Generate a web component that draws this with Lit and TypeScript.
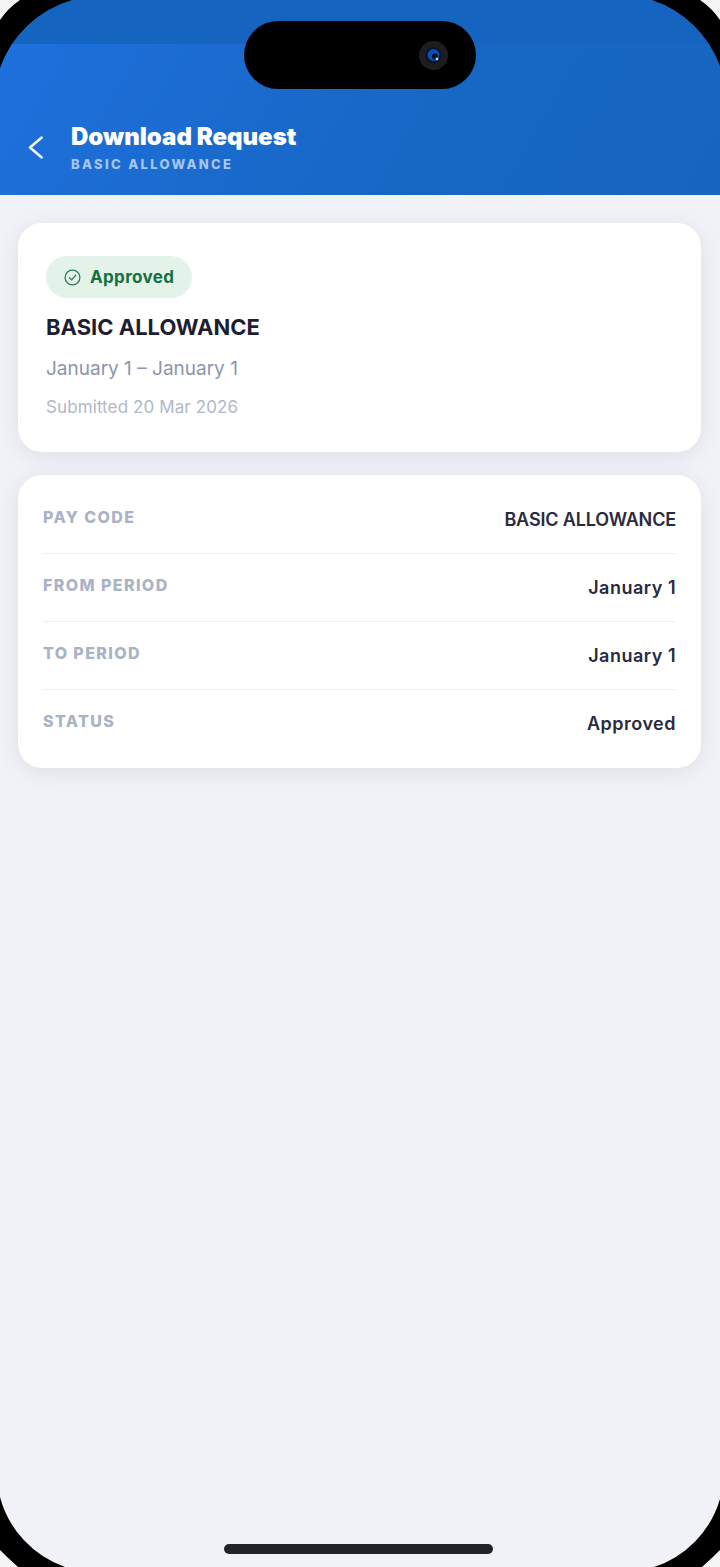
import { LitElement, html, css, svg } from "lit";
import { customElement } from "lit/decorators.js";

const rows = [
  ["PAY CODE", "BASIC ALLOWANCE", true],
  ["FROM PERIOD", "January 1", false],
  ["TO PERIOD", "January 1", false],
  ["STATUS", "Approved", false],
];

@customElement("app-root")
export class AppRoot extends LitElement {
  static styles = css`
    :host {
      display: block;
      position: relative;
      width: 720px;
      height: 1567px;
      overflow: hidden;
      background: #f0f2f7;
      font-family: Inter, "Liberation Sans", sans-serif;
    }
    .status { height: 44px; background: #1565c0; }
    .header {
      box-sizing: border-box;
      height: 151px;
      padding: 77px 0 0 24px;
      display: flex;
      align-items: flex-start;
      gap: 23px;
      background: linear-gradient(120deg, #1e70dc 0%, #1b6bd0 30%, #1666c3 65%, #1565c0 100%);
    }
    .back { width: 24px; height: 24px; margin-top: 15px; flex: none; }
    .title { margin-top: -2px; font-size: 24px; line-height: 36px; font-weight: 900; color: #fff; letter-spacing: 0; }
    .sub { font-size: 13px; line-height: 20px; margin-top: -1px; font-weight: 800; letter-spacing: 2.33px; color: #a6c6f2; }
    .content { padding: 28px 19px 0 18px; display: flex; flex-direction: column; gap: 23px; }
    .card { background: #fff; border-radius: 24px; box-shadow: 0 4px 24px rgba(0, 0, 0, 0.08); }
    .summary { box-sizing: border-box; height: 229px; padding: 33px 28px 0; display: flex; flex-direction: column; align-items: flex-start; }
    .badge {
      box-sizing: border-box; height: 42px; width: 146px; padding-left: 18px; border-radius: 21px;
      display: flex; align-items: center; gap: 9px;
      background: #e3f3ea; color: #15703f; font-size: 17px; font-weight: 700; letter-spacing: 0.35px;
    }
    .badge svg { width: 17px; height: 17px; flex: none; }
    .name { margin-top: 14px; font-size: 22px; line-height: 30px; font-weight: 700; color: #1e1e32; }
    .date { margin-top: 13px; font-size: 19px; line-height: 27px; font-weight: 400; color: #8d95aa; }
    .submitted { margin-top: 13px; font-size: 17px; line-height: 24px; font-weight: 400; letter-spacing: 0.1px; color: #b1b8c7; }
    .details { padding: 11px 25px 10px; }
    .row { display: flex; justify-content: space-between; align-items: flex-start; padding: 20px 0; height: 27px; border-bottom: 1px solid #eceef3; }
    .row:last-child { border-bottom: 0; padding-bottom: 21px; }
    .label { margin-top: -1px; font-size: 16px; line-height: 24px; font-weight: 800; letter-spacing: 1.4px; color: #a9b3c5; }
    .value { font-size: 18px; line-height: 27px; font-weight: 600; letter-spacing: 0.5px; color: #2a2a3e; }
    .value.caps { letter-spacing: -0.15px; }
    .island {
      position: absolute; left: 244px; top: 21px; width: 232px; height: 68px; border-radius: 34px; background: #000;
    }
    .cam { position: absolute; left: 175px; top: 20px; width: 29px; height: 29px; }
    .home { position: absolute; left: 224px; top: 1544px; width: 269px; height: 10px; border-radius: 5px; background: #222326; }
    .frame { position: absolute; inset: 0; width: 720px; height: 1567px; pointer-events: none; }
  `;

  render() {
    return html`
      <div class="status"></div>
      <div class="header">
        <svg class="back" viewBox="0 0 24 24" fill="none">
          <path d="M17.7 1.5 L6 11.5 L17.7 21.5" stroke="#fff" stroke-width="2.4" stroke-linecap="round" stroke-linejoin="round"/>
        </svg>
        <div>
          <div class="title">Download Request</div>
          <div class="sub">BASIC ALLOWANCE</div>
        </div>
      </div>
      <div class="content">
        <div class="card summary">
          <div class="badge">
            <svg viewBox="0 0 17 17" fill="none" stroke="#2f7f57" stroke-width="1.3" stroke-linecap="round" stroke-linejoin="round">
              <circle cx="8.5" cy="8.5" r="7.4"/>
              <path d="M5.4 8.7 L7.6 10.9 L11.7 6.2"/>
            </svg>
            <span>Approved</span>
          </div>
          <div class="name">BASIC ALLOWANCE</div>
          <div class="date">January 1 – January 1</div>
          <div class="submitted">Submitted 20 Mar 2026</div>
        </div>
        <div class="card details">
          ${rows.map(([l, v, caps]) => html`<div class="row"><span class="label">${l}</span><span class="value ${caps ? "caps" : ""}">${v}</span></div>`)}
        </div>
      </div>
      <div class="island">
        <svg class="cam" viewBox="0 0 29 29">
          <circle cx="14.5" cy="14.5" r="14.5" fill="#1d1d20"/>
          <circle cx="14.5" cy="14.5" r="8" fill="#06122a"/>
          <circle cx="14.5" cy="14" r="6" fill="#0c4fae"/>
          <circle cx="16" cy="15.5" r="3" fill="#06122a"/>
          <circle cx="18" cy="18" r="1.4" fill="#c9d6c8"/>
        </svg>
      </div>
      <div class="home"></div>
      <svg class="frame" viewBox="0 0 720 1567">
        ${svg`
          <path fill="#000" d="M0 0 L72 0 A108.6 108.6 0 0 0 0 68 Z"/>
          <path fill="#000" d="M720 0 L652 0 A108.6 108.6 0 0 1 720 66 Z"/>
          <path fill="#000" d="M0 1567 L65 1567 A101.7 101.7 0 0 1 0 1497 Z"/>
          <path fill="#000" d="M720 1567 L654 1567 A101.7 101.7 0 0 0 720 1499 Z"/>
          <path fill="#f5f5f6" d="M0 0 L20 0 Q8 8 0 20 Z"/>
          <path fill="#f5f5f6" d="M720 0 L700 0 Q712 8 720 20 Z"/>
          <path fill="#f5f5f6" d="M0 1567 L18 1567 Q8 1558 0 1550 Z"/>
          <path fill="#f5f5f6" d="M720 1567 L702 1567 Q712 1558 720 1550 Z"/>
        `}
      </svg>
    `;
  }
}
